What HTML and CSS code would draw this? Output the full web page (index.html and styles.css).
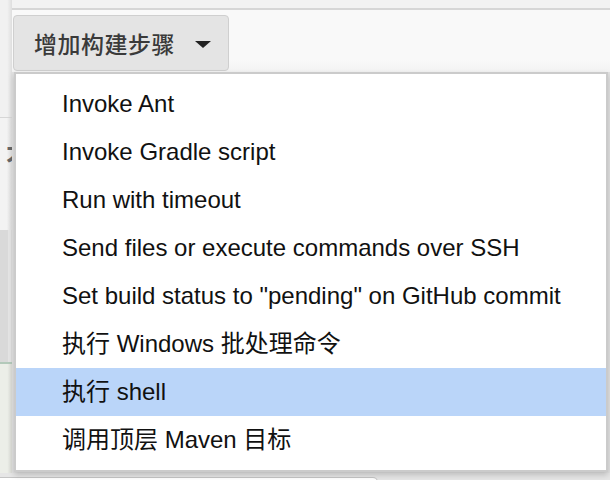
FILE: index.html
```html
<!DOCTYPE html>
<html lang="zh">
<head>
<meta charset="utf-8">
<title>增加构建步骤</title>
<link rel="stylesheet" href="styles.css">
</head>
<body>
<div class="page">
  <div class="upper">
    <div class="side">
      <div class="side-a"></div>
      <div class="side-line"></div>
      <div class="side-b"><span class="side-glyph">不</span></div>
      <div class="side-c"></div>
      <div class="side-green"></div>
      <div class="side-d"></div>
    </div>
    <div class="main">
      <div class="topstrip"></div>
      <div class="toolbar">
        <button class="add-btn" type="button">
          <span class="add-label">增加构建步骤</span>
          <span class="caret"></span>
        </button>
      </div>
      <div class="content"></div>
    </div>
  </div>
  <div class="lower">
    <div class="input"></div>
  </div>

  <ul class="menu">
    <li class="item">Invoke Ant</li>
    <li class="item">Invoke Gradle script</li>
    <li class="item">Run with timeout</li>
    <li class="item">Send files or execute commands over SSH</li>
    <li class="item">Set build status to "pending" on GitHub commit</li>
    <li class="item">执行 Windows 批处理命令</li>
    <li class="item active">执行 shell</li>
    <li class="item">调用顶层 Maven 目标</li>
  </ul>
</div>
</body>
</html>
```

FILE: styles.css
```css
* { box-sizing: border-box; }

html, body {
  margin: 0;
  padding: 0;
  width: 610px;
  height: 480px;
  overflow: hidden;
  background: #f2f2f2;
  font-family: "Liberation Sans", "Noto Sans CJK SC", sans-serif;
}

.page {
  position: relative;
  width: 610px;
  height: 480px;
  display: flex;
  flex-direction: column;
}

.upper {
  height: 473px;
  display: grid;
  grid-template-columns: 12px 1fr;
}

/* left strip (background page edge) */
.side {
  display: flex;
  flex-direction: column;
  overflow: hidden;
}
.side-a {
  height: 117px;
  background: linear-gradient(to right, #f1f1f1 0, #f1f1f1 60%, #dedede 100%);
}
.side-line {
  height: 1px;
  background: #d6d6d6;
}
.side-b {
  height: 112px;
  background: linear-gradient(to right, #f3f3f3 0, #f3f3f3 55%, #dcdcdc 100%);
  padding-top: 26px;
  padding-left: 6px;
  white-space: nowrap;
  overflow: hidden;
}
.side-glyph {
  font-family: "Noto Sans CJK SC", sans-serif;
  font-size: 24px;
  font-weight: 700;
  color: #666;
  line-height: 1;
}
.side-c {
  height: 132px;
  background: linear-gradient(to right, #d9d9d9 0, #d9d9d9 66%, #e4e4e4 70%, #e4e4e4 92%, #cfcfcf 100%);
}
.side-green {
  height: 2px;
  background: #b3c9ba;
}
.side-d {
  flex: 1;
  background: linear-gradient(to right, #eceee8 0, #eceee8 60%, #d9dad5 100%);
}

/* main column */
.main {
  display: flex;
  flex-direction: column;
  min-width: 0;
}
.topstrip {
  height: 8px;
  background: #f2f2f2;
  border-bottom: 2px solid #d6d6d6;
  box-sizing: content-box;
}
.toolbar {
  height: 62px;
  background: linear-gradient(to bottom, #f9f9f9 0, #f9f9f9 80%, #f3f3f3 100%);
  padding: 5px 0 0 1px;
}
.content {
  flex: 1;
  background: #e2e2e2;
}

.add-btn {
  display: flex;
  align-items: center;
  width: 216px;
  height: 56px;
  padding: 0 17px 0 20px;
  margin: 0;
  background: #e4e4e4;
  border: 1px solid #cfcfcf;
  border-radius: 4px;
  font-family: "Noto Sans CJK SC", sans-serif;
  font-size: 23px;
  font-weight: 500;
  color: #3a3a3a;
  cursor: pointer;
}
.add-label {
  flex: 1;
  text-align: left;
  letter-spacing: 0.5px;
}
.caret {
  width: 0;
  height: 0;
  border-left: 8px solid transparent;
  border-right: 8px solid transparent;
  border-top: 7px solid #222;
  margin-top: 2px;
}

/* bottom strip */
.lower {
  height: 7px;
  background: #e6e6e6;
  padding-top: 4px;
}
.input {
  width: 378px;
  height: 10px;
  background: #fff;
  border: 1px solid #c4c4c4;
  border-left: 0;
  border-top-right-radius: 5px;
}

/* dropdown menu */
.menu {
  position: absolute;
  left: 14px;
  top: 72px;
  width: 594px;
  height: 400px;
  margin: 0;
  padding: 6px 0;
  list-style: none;
  background: #fff;
  border: 2px solid #cbcbcb;
  box-shadow: 0 3px 6px rgba(0, 0, 0, 0.18);
}
.item {
  height: 48px;
  line-height: 48px;
  padding-left: 46px;
  font-size: 24px;
  color: #111;
  white-space: nowrap;
}
.item.active {
  background: #bad5f9;
}
```
